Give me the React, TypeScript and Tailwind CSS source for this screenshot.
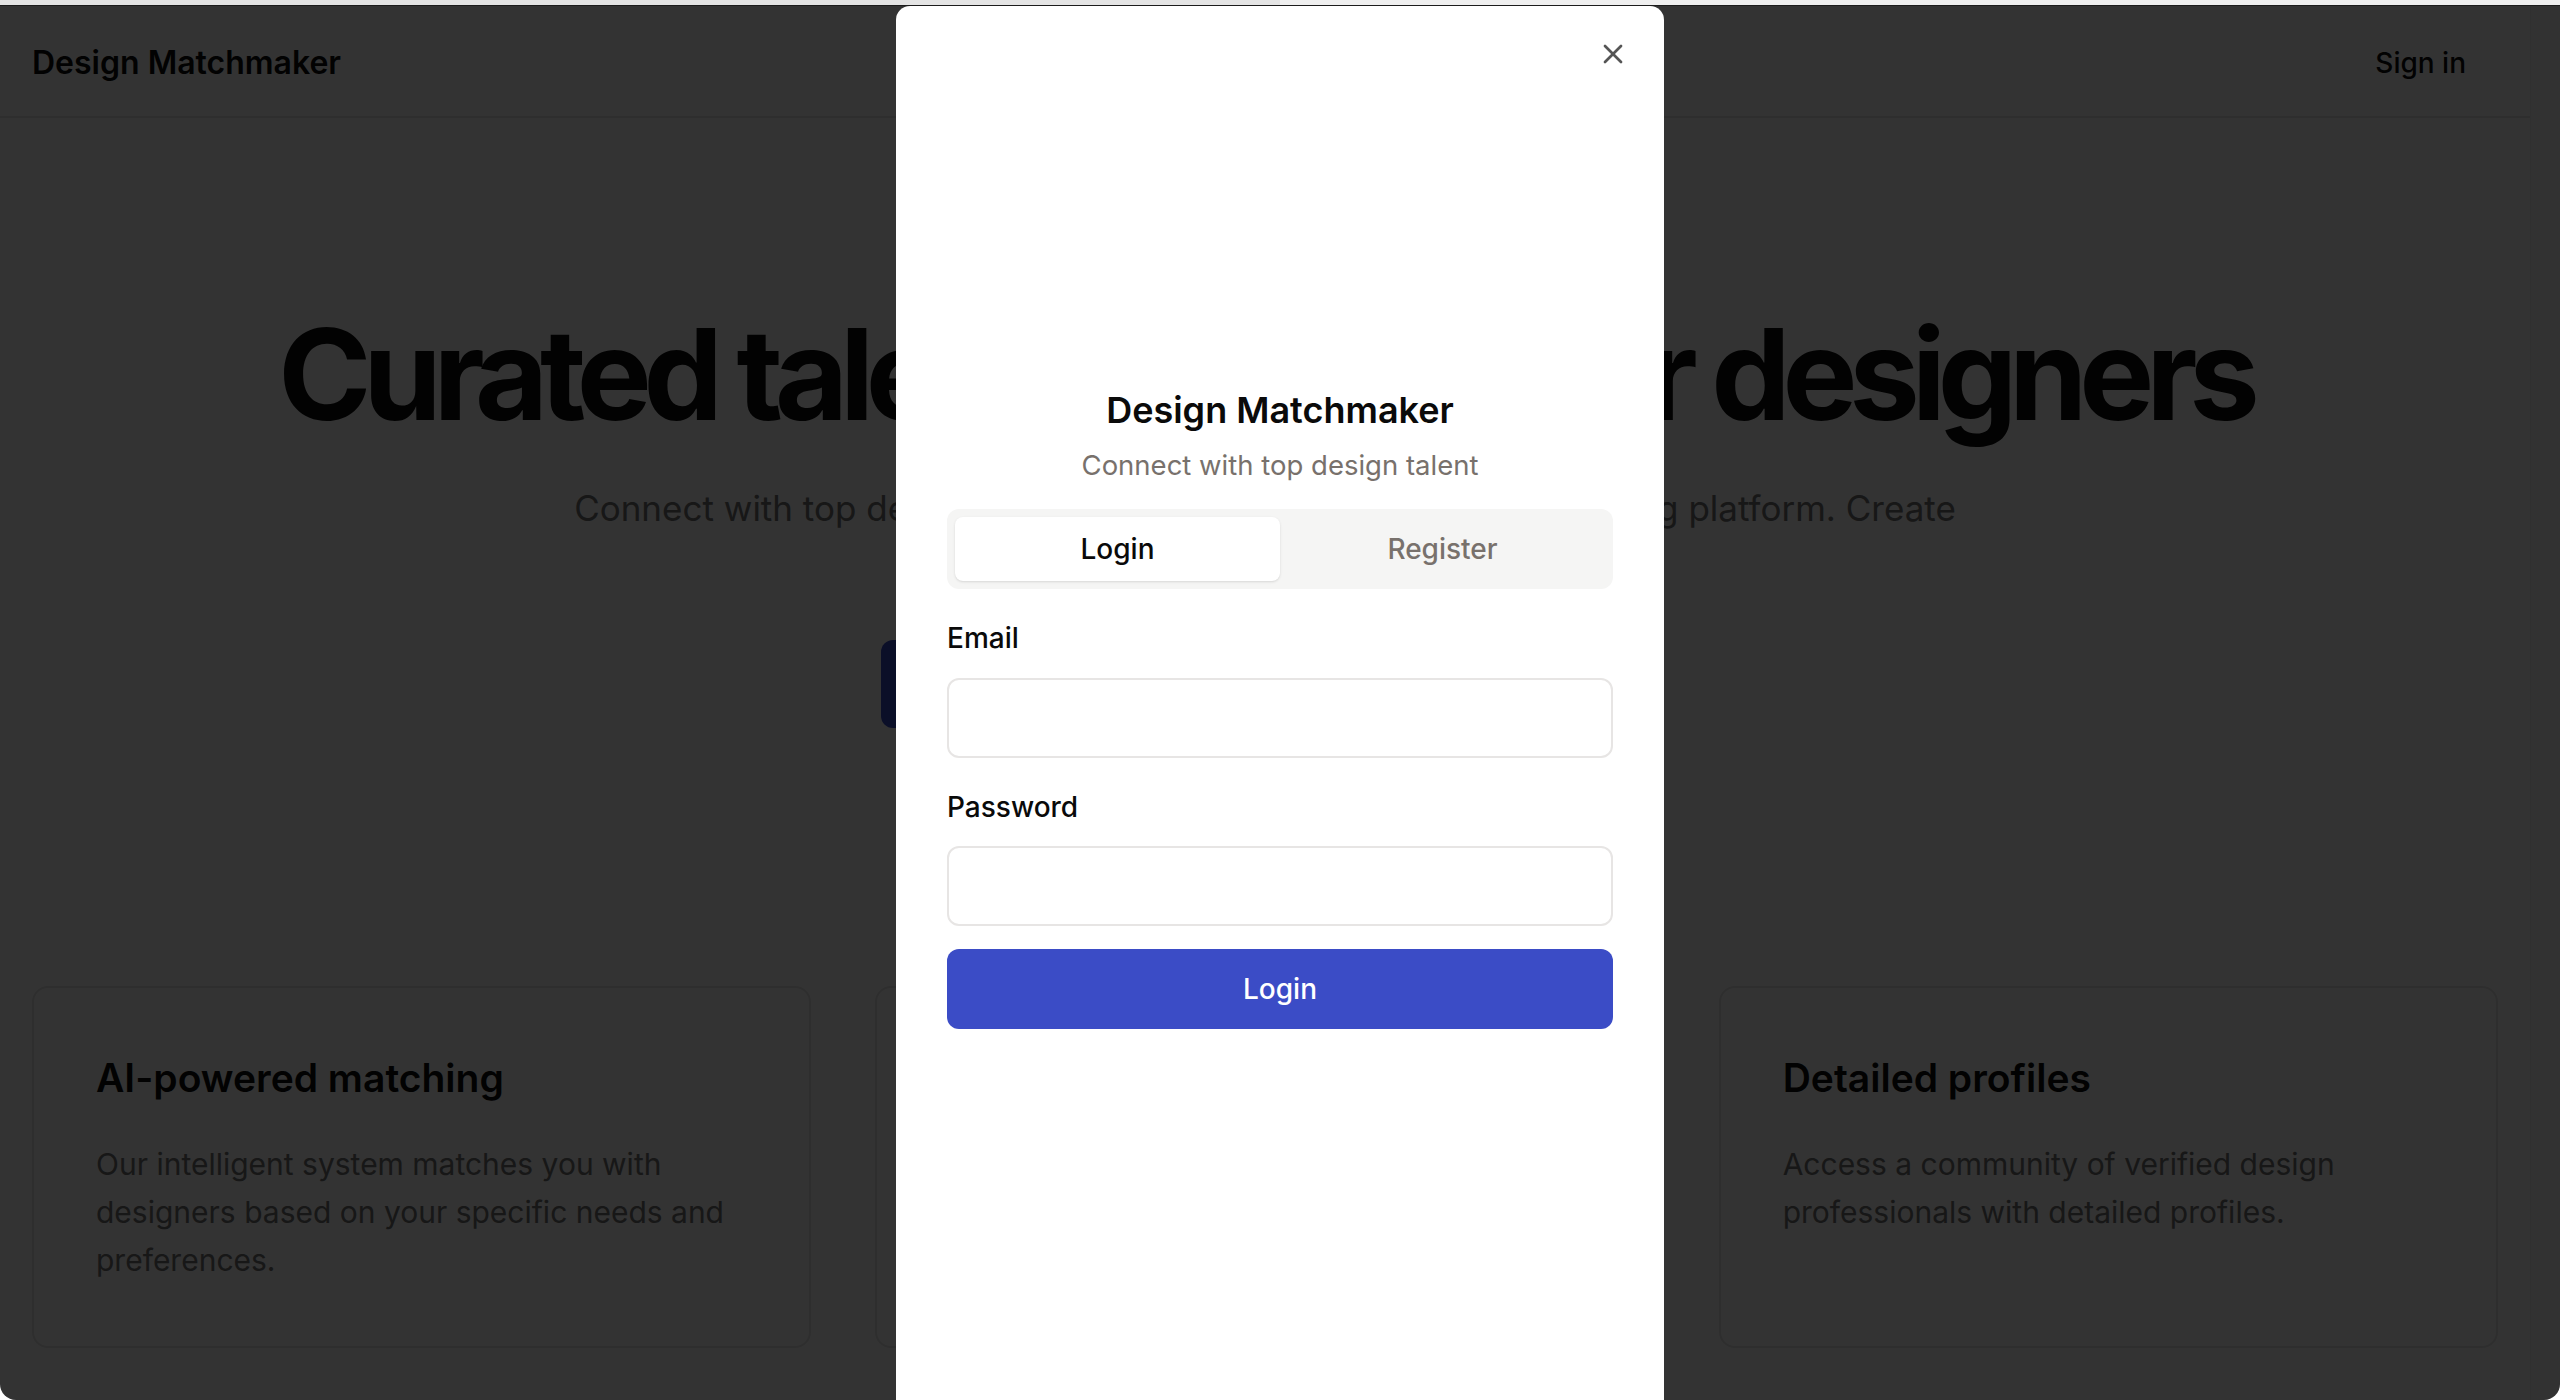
import React, { useState } from 'react';
import { X } from 'lucide-react';

const features = [
  {
    title: 'AI-powered matching',
    body: 'Our intelligent system matches you with designers based on your specific needs and preferences.',
  },
  {
    title: 'Curated talent',
    body: 'Every designer is reviewed by our team so you only meet the best in the field.',
  },
  {
    title: 'Detailed profiles',
    body: 'Access a community of verified design professionals with detailed profiles.',
  },
];

const AuthModal = () => {
  const [tab, setTab] = useState<'login' | 'register'>('login');

  return (
    <div className="absolute top-0 bottom-0 left-1/2 -translate-x-1/2 w-[768px] bg-white rounded-t-[14px] px-[51px] pt-[376px]">
      <button className="absolute right-[35px] top-[32px] text-[#555555]">
        <X size={32} strokeWidth={2} />
      </button>

      <h2 className="text-center text-[36px] leading-[56px] font-semibold text-[#0a0a0a]">
        Design Matchmaker
      </h2>
      <p className="mt-[7px] text-center text-[27.5px] leading-[40px] text-[#78716c]">
        Connect with top design talent
      </p>

      {/* Login / Register switch */}
      <div className="mt-[24px] h-[80px] rounded-[12px] bg-[#f5f5f4] p-[8px] grid grid-cols-2">
        <button
          onClick={() => setTab('login')}
          className={`rounded-[8px] text-[28px] font-medium ${tab === 'login' ? 'bg-white text-[#0a0a0a] shadow-sm' : 'text-[#78716c]'}`}
        >
          Login
        </button>
        <button
          onClick={() => setTab('register')}
          className={`rounded-[8px] text-[28px] font-medium ${tab === 'register' ? 'bg-white text-[#0a0a0a] shadow-sm' : 'text-[#78716c]'}`}
        >
          Register
        </button>
      </div>

      <form className="mt-[29px] flex flex-col" onSubmit={(e) => e.preventDefault()}>
        <label className="text-[28px] leading-[40px] font-medium text-[#0a0a0a]">Email</label>
        <input
          type="email"
          className="mt-[20px] h-[80px] rounded-[12px] border-2 border-[#e7e5e4] px-[24px] text-[28px] outline-none"
        />
        <label className="mt-[29px] text-[28px] leading-[40px] font-medium text-[#0a0a0a]">Password</label>
        <input
          type="password"
          className="mt-[19px] h-[80px] rounded-[12px] border-2 border-[#e7e5e4] px-[24px] text-[28px] outline-none"
        />
        <button className="mt-[23px] h-[80px] rounded-[12px] bg-[#3b4cc6] text-[28px] font-medium text-white">
          Login
        </button>
      </form>
    </div>
  );
};

export default function App() {
  return (
    <div className="h-[1400px] w-full bg-white overflow-hidden flex flex-col font-[Inter,sans-serif]">
      {/* window top edge */}
      <div className="h-[6px] flex shrink-0 border-b border-[#1c1c1c]">
        <div className="w-1/2 bg-[#e4e4e4]" />
        <div className="w-1/2 bg-[#efefef]" />
      </div>

      <div className="relative flex-1 flex rounded-b-[16px] overflow-hidden bg-white">
        <div className="flex-1 flex flex-col">
          <header className="h-[112px] shrink-0 flex items-center justify-between px-[32px] pt-[3px] border-b-2 border-[#e5e5e5]">
            <span className="text-[32px] font-semibold text-[#0a0a0a]">Design Matchmaker</span>
            <button className="px-[32px] text-[28px] font-medium text-[#0a0a0a]">Sign in</button>
          </header>

          <section className="pt-[193px] flex flex-col items-center text-center">
            <h1 className="text-[126px] leading-none font-bold tracking-[-0.065em] text-[#0a0a0a] whitespace-nowrap">
              Curated talent network for designers
            </h1>
            <p className="mt-[43px] text-[35px] leading-[56px] text-[#737373] whitespace-nowrap">
              Connect with top designers through our own AI-powered matching platform. Create
              <br />
              your profile and get matched today.
            </p>
            <div className="mt-[48px] flex gap-[32px]">
              <button className="w-[368px] h-[88px] rounded-[12px] bg-[#3b4cc6] text-[32px] font-medium text-white">
                Find a designer
              </button>
              <button className="w-[368px] h-[88px] rounded-[12px] border-2 border-[#e5e5e5] text-[32px] font-medium text-[#0a0a0a]">
                Join as designer
              </button>
            </div>
          </section>

          <section className="mt-[258px] px-[32px] grid grid-cols-3 gap-[64px]">
            {features.map((f) => (
              <div key={f.title} className="rounded-[16px] border-2 border-[#e5e5e5] p-[62px]">
                <h3 className="text-[39px] leading-[56px] font-semibold text-[#0a0a0a]">{f.title}</h3>
                <p className="mt-[34px] text-[30px] leading-[48px] text-[#737373]">{f.body}</p>
              </div>
            ))}
          </section>
        </div>
        {/* scrollbar gutter */}
        <div className="w-[30px] shrink-0 bg-[#fafafa] border-l border-[#f0f0f0]" />

        <div className="absolute inset-0 bg-black/80" />
        <AuthModal />
      </div>
    </div>
  );
}
